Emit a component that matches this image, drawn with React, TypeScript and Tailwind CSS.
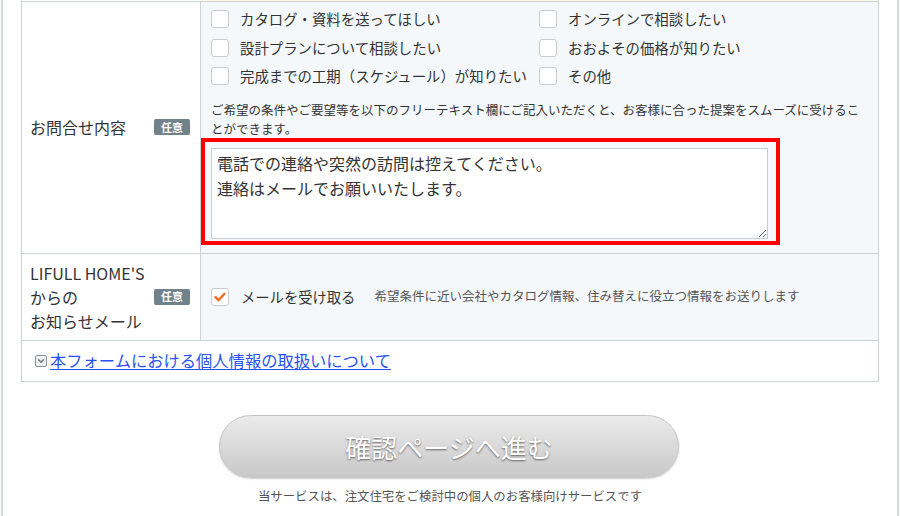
const FONT = "font-['Noto_Sans_CJK_JP','Noto_Sans',sans-serif]";

const choices: [string, string][] = [
  ['カタログ・資料を送ってほしい', 'オンラインで相談したい'],
  ['設計プランについて相談したい', 'おおよその価格が知りたい'],
  ['完成までの工期（スケジュール）が知りたい', 'その他'],
];

function Checkbox({ checked = false }: { checked?: boolean }) {
  return (
    <span className="flex h-[18px] w-[18px] shrink-0 items-center justify-center rounded-[3px] border border-[#c9cdd0] bg-white">
      {checked && (
        <svg width="14" height="14" viewBox="0 0 14 14" fill="none">
          <path d="M2.5 7.2l3 3L11.5 3.8" stroke="#f0691c" strokeWidth="2.4" strokeLinecap="round" strokeLinejoin="round" />
        </svg>
      )}
    </span>
  );
}

function Badge() {
  return (
    <span className="flex h-[16px] w-[36px] items-center justify-center rounded-[2px] bg-[#71828a] text-[11px] font-bold leading-none text-white">
      任意
    </span>
  );
}

function CheckItem({ label }: { label: string }) {
  return (
    <label className="flex h-[28.5px] items-center gap-[11px] whitespace-nowrap text-[14.4px]">
      <Checkbox />
      <span>{label}</span>
    </label>
  );
}

export default function App() {
  return (
    <div className={`${FONT} min-h-[516px] w-[900px] bg-white text-[#333]`}>
      <div className="mx-px min-h-[516px] border-x-2 border-[#d3d9dc]">
        {/* Form table */}
        <div className="ml-[18px] w-[858px]">
          {/* strip of the previous row */}
          <div className="grid h-px grid-cols-[179px_1fr] border-x border-[#ccd3d7]">
            <div className="bg-white" />
            <div className="bg-[#fbf9e4]" />
          </div>

          <div className="border border-[#ccd3d7]">
            {/* お問合せ内容 */}
            <div className="grid grid-cols-[179px_1fr]">
              <div className="flex items-center justify-between border-r border-[#ccd3d7] bg-white pl-[8px] pr-[10px] text-[16px]">
                <span>お問合せ内容</span>
                <Badge />
              </div>
              <div className="bg-[#f5f8fa] pb-[8px] pl-[10px] pt-[3px]">
                <div className="grid grid-cols-[328px_1fr]">
                  {choices.map(([a, b]) => (
                    <div key={a} className="contents">
                      <CheckItem label={a} />
                      <CheckItem label={b} />
                    </div>
                  ))}
                </div>
                <p className="mt-[9px] whitespace-nowrap text-[12.5px] leading-[19px]">
                  ご希望の条件やご要望等を以下のフリーテキスト欄にご記入いただくと、お客様に合った提案をスムーズに受けるこ
                  <br />
                  とができます。
                </p>
                <div className="ml-[-10px] w-[579px] border-4 border-[#ff0000] pb-[2px] pl-[6px] pt-[6px]">
                  <textarea
                    className="block h-[91px] w-[557px] resize-y border border-[#c9cdd0] bg-white px-[5px] py-[2px] text-[16px] leading-[25px] text-[#333] outline-none"
                    defaultValue={'電話での連絡や突然の訪問は控えてください。\n連絡はメールでお願いいたします。'}
                  />
                </div>
              </div>
            </div>

            {/* メール配信 */}
            <div className="grid grid-cols-[179px_1fr] border-t border-[#ccd3d7]">
              <div className="flex items-center justify-between border-r border-[#ccd3d7] bg-white py-[7px] pl-[8px] pr-[10px] text-[16px] leading-[24px]">
                <span>
                  LIFULL HOME'S
                  <br />
                  からの
                  <br />
                  お知らせメール
                </span>
                <Badge />
              </div>
              <div className="flex items-center bg-[#f5f8fa] pl-[10px]">
                <label className="flex items-center gap-[12px] whitespace-nowrap text-[14.3px]">
                  <Checkbox checked />
                  <span>メールを受け取る</span>
                </label>
                <span className="ml-[19px] whitespace-nowrap text-[12.5px] text-[#555]">
                  希望条件に近い会社やカタログ情報、住み替えに役立つ情報をお送りします
                </span>
              </div>
            </div>

            {/* 個人情報 link */}
            <div className="flex h-[41px] items-center gap-[3px] border-t border-[#ccd3d7] bg-white pl-[13px]">
              <span className="flex h-[12px] w-[12px] items-center justify-center rounded-[2px] border border-[#8a8f93] bg-[#eef0f1]">
                <svg width="8" height="8" viewBox="0 0 8 8" fill="none">
                  <path d="M1.5 2.8L4 5.3l2.5-2.5" stroke="#6b7075" strokeWidth="1.4" strokeLinecap="round" strokeLinejoin="round" />
                </svg>
              </span>
              <a href="#" className="text-[16.3px] text-[#2a52f0] underline underline-offset-2">
                本フォームにおける個人情報の取扱いについて
              </a>
            </div>
          </div>
        </div>

        {/* Submit */}
        <div className="mt-[33px] flex flex-col items-center">
          <button
            type="button"
            className="ml-[-2px] flex h-[63px] w-[460px] items-center justify-center rounded-full border border-[#c4c4c4] bg-linear-to-b from-[#ebebeb] to-[#c8c8c8] text-[26px] text-white shadow-[0_1px_2px_rgba(0,0,0,0.2)] [text-shadow:0_1px_2px_rgba(0,0,0,0.55)]"
          >
            確認ページへ進む
          </button>
          <p className="mt-[9px] text-[12.4px] text-[#555]">当サービスは、注文住宅をご検討中の個人のお客様向けサービスです</p>
        </div>
      </div>
    </div>
  );
}
